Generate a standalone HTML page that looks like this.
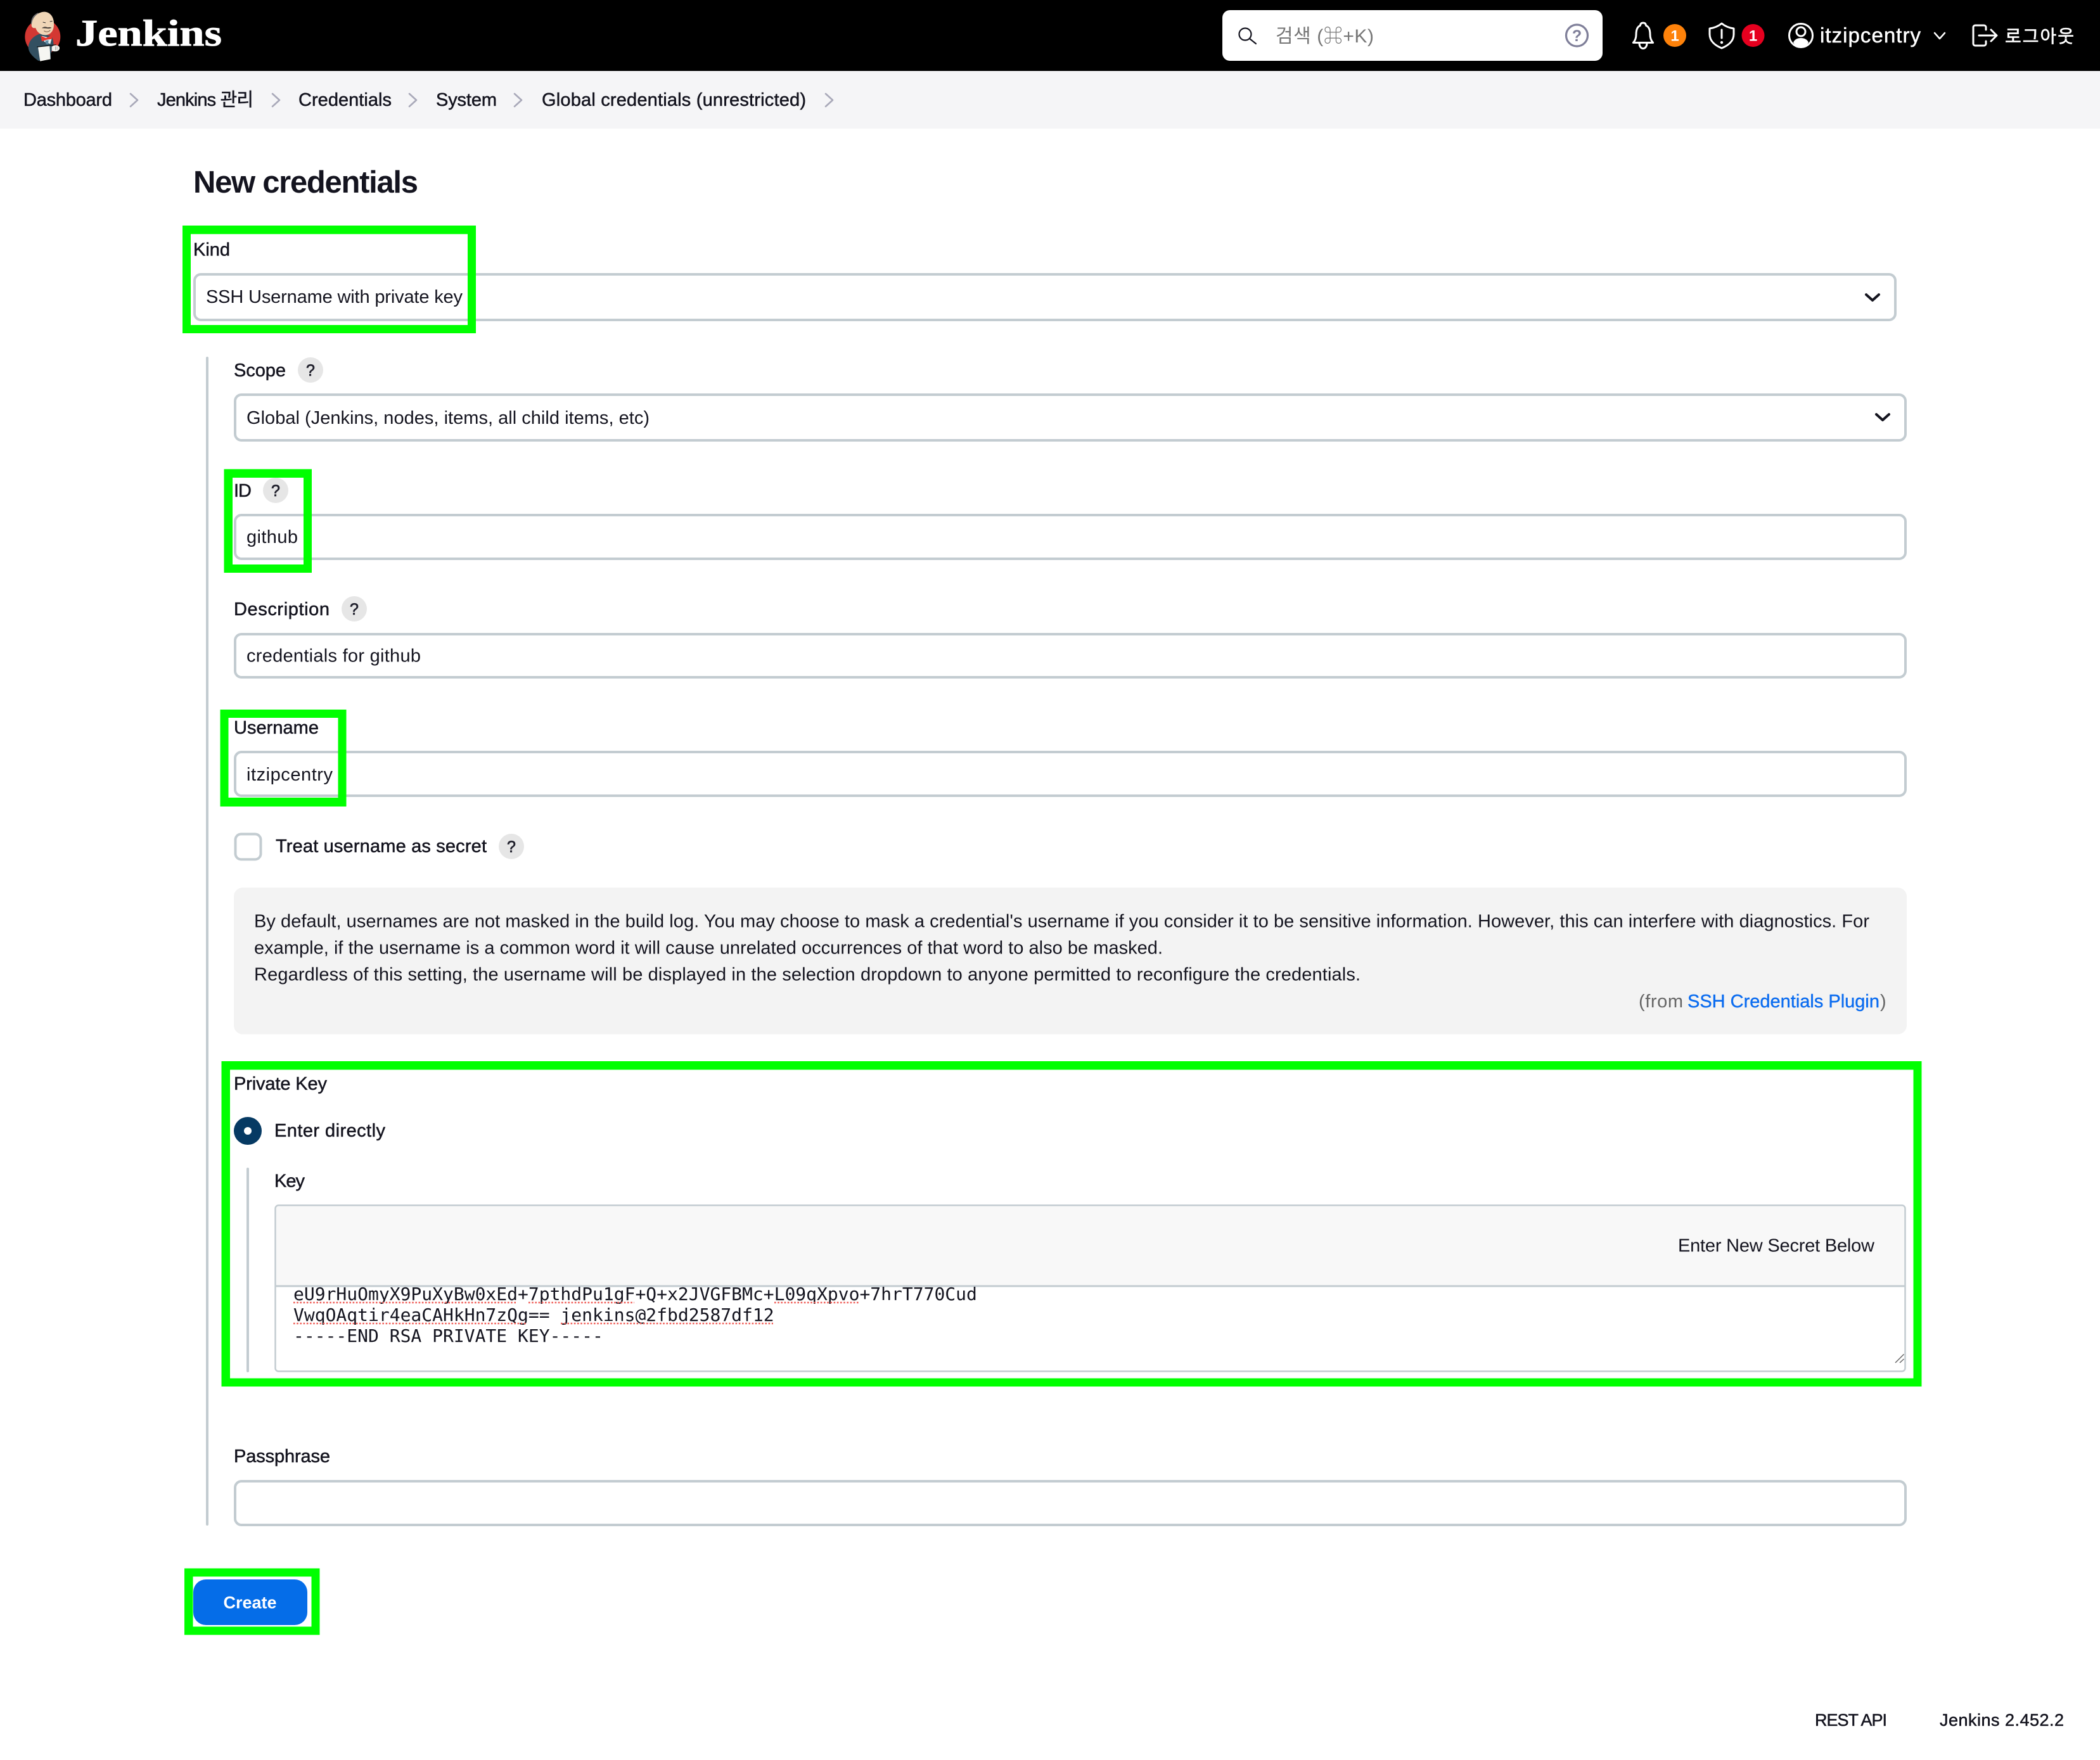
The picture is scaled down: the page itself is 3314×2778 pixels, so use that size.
<!DOCTYPE html>
<html lang="en">
<head>
<meta charset="utf-8">
<title>New credentials - Jenkins</title>
<style>
html,body{margin:0;padding:0;background:#fff;width:3314px;height:2778px;overflow:hidden}
svg{display:block}
text{font-family:"Liberation Sans","Noto Sans CJK KR",sans-serif;font-size:29px;fill:#14141f;white-space:pre}
.m{stroke:#14141f;stroke-width:.5px}
.mono{font-family:"DejaVu Sans Mono","Liberation Mono",monospace;font-size:28px}
.box{fill:#fff;stroke:#c3ccd1;stroke-width:4}
.q{font-size:25px;font-weight:400;stroke:#20202c;stroke-width:.7px;text-anchor:middle;fill:#20202c}
.g{fill:#00ff00}
.wl{fill:none;stroke:#fff;stroke-width:3;stroke-linecap:round;stroke-linejoin:round}
.cr{fill:none;stroke:#a9a9b9;stroke-width:2.6;stroke-linecap:round;stroke-linejoin:round}
.ar{fill:none;stroke:#14141f;stroke-width:4;stroke-linecap:round;stroke-linejoin:round}
.sq{fill:none;stroke:#f0605a;stroke-width:2.5;stroke-dasharray:2.6 2.6}
</style>
</head>
<body>
<svg xmlns="http://www.w3.org/2000/svg" width="3314" height="2778" viewBox="0 0 3314 2778">
<rect width="3314" height="2778" fill="#fff"/>

<!-- header -->
<rect width="3314" height="112" fill="#000"/>
<g transform="translate(30,10) scale(.3333)">
  <circle cx="112" cy="144" r="84" fill="#d33833"/>
  <path d="M44 195C46 160 72 138 100 130L152 140C166 160 165 185 160 200L150 225L150 250L92 258C70 242 46 222 44 195Z" fill="#335061"/>
  <path d="M57 85C55 60 68 38 92 30L80 90Z" fill="#6d6b6d"/>
  <path d="M60 84C64 50 92 25 122 26C150 28 168 55 165 90C164 115 150 135 125 136C100 136 86 122 78 102C66 106 56 97 60 84Z" fill="#f0d6b7"/>
  <path d="M113 75L126 78M146 72L158 70" stroke="#2b2b2b" stroke-width="3" fill="none"/>
  <path d="M108 103C118 94 128 96 136 100C143 98 150 98 154 102C146 106 138 106 134 105C126 103 116 104 108 103Z" fill="#49403a"/>
  <path d="M118 116C130 124 142 120 148 113" stroke="#7b5a44" stroke-width="3" fill="none"/>
  <path d="M108 140L120 168L148 178L155 152Z" fill="#e8f0f2"/>
  <path d="M103 140L128 150L155 137L156 155L132 158L108 166Z" fill="#e8352c"/>
  <path d="M124 162L140 160L138 180L128 178Z" fill="#5d8ca5"/>
  <path d="M85 192L176 182" stroke="#111" stroke-width="4"/>
  <path d="M90 194L145 188L149 250L100 260Z" fill="#f6f6f2"/>
  <path d="M155 192C165 180 190 182 192 196C194 212 170 218 155 210Z" fill="#f4f4f0"/>
  <path d="M172 190V208M180 190V206" stroke="#777" stroke-width="2"/>
</g>
<text x="119" y="72" textLength="231" lengthAdjust="spacingAndGlyphs" style="font-family:'Liberation Serif',serif;font-size:59px;font-weight:700;fill:#fff;stroke:#fff;stroke-width:.8px">Jenkins</text>

<!-- search -->
<rect x="1929" y="16" width="600" height="80" rx="12" fill="#fff"/>
<circle cx="1965" cy="54" r="9.500" fill="none" stroke="#14141f" stroke-width="2.200"/>
<path d="M1972 61L1982 69" stroke="#14141f" stroke-width="2.200" stroke-linecap="round"/>
<text x="2013" y="67" textLength="155" style="font-size:30px;fill:#767676;font-family:'Liberation Sans','Noto Sans CJK KR','DejaVu Sans',sans-serif">검색 (⌘+K)</text>
<circle cx="2488.5" cy="56" r="17" fill="none" stroke="#7f7f99" stroke-width="3.2"/>
<text x="2488.5" y="65" text-anchor="middle" style="font-size:25px;font-weight:700;fill:#7f7f99">?</text>

<!-- bell -->
<path class="wl" d="M2593 36c-3 0-4.3 2-4.6 4.4c-5.2 2-6.4 8-6.4 14c0 5-1 9-4.6 13h31.2c-3.6-4-4.6-8-4.6-13c0-6-1.2-12-6.4-14c-.3-2.400-1.600-4.400-4.600-4.400z"/>
<path class="wl" d="M2587 68c0 5 2.500 8.500 6 8.500s6-3.500 6-8.500"/>
<circle cx="2643" cy="56" r="18" fill="#fe820a"/>
<text x="2643" y="64.500" text-anchor="middle" style="font-size:24px;fill:#fff;font-weight:700">1</text>
<!-- shield -->
<path class="wl" d="M2717 37C2711 42 2705 44 2698 45V54C2698 65 2707 72 2717 76C2727 72 2736 65 2736 54V45C2729 44 2723 42 2717 37Z"/>
<path class="wl" d="M2717 47V60"/>
<circle cx="2717" cy="67" r="2.200" fill="#fff"/>
<circle cx="2766.500" cy="56" r="18" fill="#e6001f"/>
<text x="2766.500" y="64.500" text-anchor="middle" style="font-size:24px;fill:#fff;font-weight:700">1</text>
<!-- user -->
<circle class="wl" cx="2842" cy="56" r="18.500"/>
<circle class="wl" cx="2842" cy="50" r="7"/>
<path d="M2830 67C2832 62 2837 60 2842 60C2847 60 2852 62 2854 67C2851 72 2847 74 2842 74C2837 74 2833 72 2830 67Z" fill="#fff"/>
<text x="2872" y="67" textLength="159" style="font-size:33px;fill:#fff;stroke:#fff;stroke-width:.5px">itzipcentry</text>
<path class="wl" style="stroke-width:2.500" d="M3053 52L3061 61L3069 52"/>
<!-- logout -->
<path class="wl" d="M3134 47V43a3 3 0 0 0-3-3H3117a3 3 0 0 0-3 3V69a3 3 0 0 0 3 3H3131a3 3 0 0 0 3-3V65"/>
<path class="wl" d="M3123 56H3150M3142 47L3151 56L3142 65"/>
<text x="3164" y="67" textLength="109" style="font-size:28px;fill:#fff;stroke:#fff;stroke-width:.7px">로그아웃</text>

<!-- breadcrumb -->
<rect y="112" width="3314" height="91" fill="#f5f5f7"/>
<g class="bc">
<text class="m" x="37" y="167" textLength="140">Dashboard</text>
<path class="cr" d="M206 148L217 158L206 168"/>
<text class="m" x="248" y="167" textLength="152">Jenkins 관리</text>
<path class="cr" d="M430 148L441 158L430 168"/>
<text class="m" x="471" y="167" textLength="147">Credentials</text>
<path class="cr" d="M646 148L657 158L646 168"/>
<text class="m" x="688" y="167" textLength="96">System</text>
<path class="cr" d="M812 148L823 158L812 168"/>
<text class="m" x="855" y="167" textLength="417">Global credentials (unrestricted)</text>
<path class="cr" d="M1303 148L1314 158L1303 168"/>
</g>

<!-- title -->
<text x="305" y="304" textLength="355" style="font-size:49px;font-weight:700">New credentials</text>

<!-- kind -->
<text class="m" x="305" y="403.500" textLength="58">Kind</text>
<rect class="box" x="307" y="433" width="2684" height="72" rx="10"/>
<text x="325" y="478" textLength="405">SSH Username with private key</text>
<path class="ar" d="M2945 465L2955 474L2965 465"/>

<!-- left rule -->
<rect x="325" y="563" width="4" height="1845" rx="2" fill="#c3ccd1"/>

<!-- scope -->
<text class="m" x="369" y="594" textLength="82">Scope</text>
<circle cx="490" cy="584" r="20" fill="#e6e6e6"/><text class="q" x="490" y="593">?</text>
<rect class="box" x="371" y="623" width="2636" height="72" rx="10"/>
<text x="389" y="669" textLength="636">Global (Jenkins, nodes, items, all child items, etc)</text>
<path class="ar" d="M2961 654L2971 663L2981 654"/>

<!-- id -->
<text class="m" x="369" y="784" textLength="28">ID</text>
<circle cx="435" cy="774" r="20" fill="#e6e6e6"/><text class="q" x="435" y="783">?</text>
<rect class="box" x="371" y="813" width="2636" height="69" rx="10"/>
<text x="389" y="857" textLength="81">github</text>

<!-- description -->
<text class="m" x="369" y="971" textLength="151">Description</text>
<circle cx="559" cy="961" r="20" fill="#e6e6e6"/><text class="q" x="559" y="970">?</text>
<rect class="box" x="371" y="1001" width="2636" height="68" rx="10"/>
<text x="389" y="1044.500" textLength="275">credentials for github</text>

<!-- username -->
<text class="m" x="369" y="1158" textLength="134">Username</text>
<rect class="box" x="371" y="1187" width="2636" height="69" rx="10"/>
<text x="389" y="1232" textLength="136">itzipcentry</text>

<!-- treat -->
<rect class="box" x="371.500" y="1316.500" width="40" height="40" rx="9"/>
<text class="m" x="435" y="1345" textLength="333">Treat username as secret</text>
<circle cx="807" cy="1336" r="20" fill="#e6e6e6"/><text class="q" x="807" y="1345">?</text>

<!-- help -->
<rect x="369" y="1401" width="2640" height="231.500" rx="14" fill="#f3f3f3"/>
<text x="401" y="1463.500" textLength="2549">By default, usernames are not masked in the build log. You may choose to mask a credential's username if you consider it to be sensitive information. However, this can interfere with diagnostics. For</text>
<text x="401" y="1505.500" textLength="1434">example, if the username is a common word it will cause unrelated occurrences of that word to also be masked.</text>
<text x="401" y="1547.500" textLength="1746">Regardless of this setting, the username will be displayed in the selection dropdown to anyone permitted to reconfigure the credentials.</text>
<text x="2586" y="1590" textLength="70" style="fill:#666">(from</text>
<text x="2663" y="1590" textLength="303" style="fill:#0b6cf0;stroke:#0b6cf0;stroke-width:.4px">SSH Credentials Plugin</text>
<text x="2967" y="1590" style="fill:#666">)</text>

<!-- private key -->
<text class="m" x="369" y="1720" textLength="147">Private Key</text>
<circle cx="391" cy="1785" r="22" fill="#063a63"/>
<circle cx="391" cy="1785" r="6" fill="#fff"/>
<text class="m" x="433" y="1794" textLength="175">Enter directly</text>
<rect x="389" y="1843" width="4" height="323" rx="2" fill="#c3ccd1"/>
<text class="m" x="433" y="1873.500" textLength="48">Key</text>

<!-- key box -->
<rect x="434.500" y="1902.500" width="2572" height="262" rx="5" fill="#fff"/>
<path d="M434.500 2030V1907.500a5 5 0 0 1 5-5H3001.500a5 5 0 0 1 5 5V2030Z" fill="#f8f8f8"/>
<rect x="434.500" y="1902.500" width="2572" height="262" rx="5" fill="none" stroke="#c3ccd1" stroke-width="2.500"/>
<rect x="434" y="2028.500" width="2573" height="3" fill="#c3ccd1"/>
<text x="2648" y="1975.500" textLength="310">Enter New Secret Below</text>
<text class="mono" x="463" y="2052">eU9rHuOmyX9PuXyBw0xEd+7pthdPu1gF+Q+x2JVGFBMc+L09qXpvo+7hrT770Cud</text>
<text class="mono" x="463" y="2085">VwqOAqtir4eaCAHkHn7zQg== jenkins@2fbd2587df12</text>
<text class="mono" x="463" y="2118">-----END RSA PRIVATE KEY-----</text>
<path class="sq" d="M463 2056H816M834 2056H1001M1222 2056H1356M463 2089H832M885 2089H1220"/>
<path d="M2991 2151L3004.500 2137.500M2998 2151L3004.500 2145" stroke="#666" stroke-width="1.500" fill="none"/>

<!-- passphrase -->
<text class="m" x="369" y="2308" textLength="152">Passphrase</text>
<rect class="box" x="371" y="2338" width="2636" height="69" rx="10"/>

<!-- create -->
<rect x="305" y="2493" width="180" height="72" rx="20" fill="#056de8"/>
<text x="352.500" y="2538.500" textLength="84" style="font-size:27px;font-weight:700;fill:#fff">Create</text>

<!-- footer -->
<text class="m" x="2864" y="2724" textLength="114" style="font-size:27px">REST API</text>
<text class="m" x="3061" y="2724" textLength="196" style="font-size:27px">Jenkins 2.452.2</text>

<!-- green highlight frames -->
<path class="g" fill-rule="evenodd" d="M288 356H751V526H288ZM301 369.500V513H738V369.500Z"/>
<path class="g" fill-rule="evenodd" d="M353.500 740.500H492V904H353.500ZM367 754V891H479V754Z"/>
<path class="g" fill-rule="evenodd" d="M347.500 1120H546.500V1273H347.500ZM360.500 1133V1259H533.500V1133Z"/>
<path class="g" fill-rule="evenodd" d="M349.500 1675H3032.500V2188.500H349.500ZM363 1688.500V2175.500H3019.500V1688.500Z"/>
<path class="g" fill-rule="evenodd" d="M291 2475.500H504.500V2580.500H291ZM304.500 2488.500V2567.500H491.500V2488.500Z"/>
</svg>
</body>
</html>
